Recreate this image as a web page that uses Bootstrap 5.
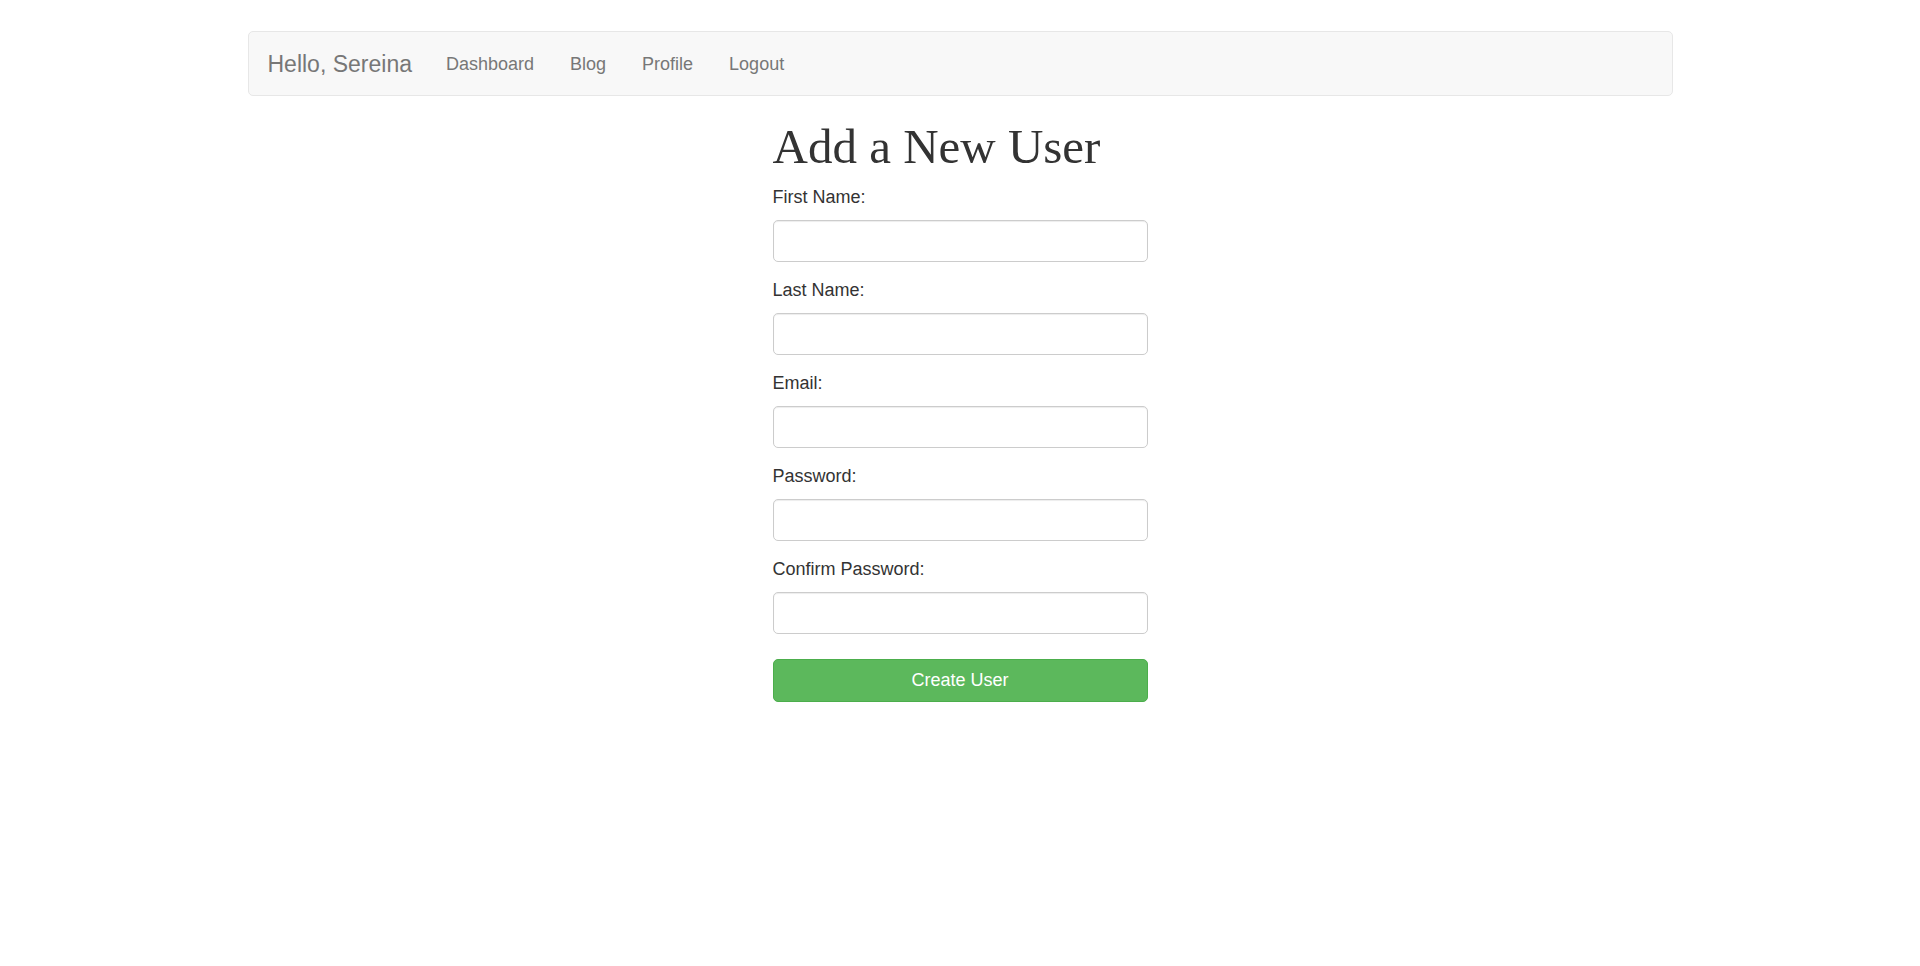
<!DOCTYPE html>
<html lang="en">
<head>
<meta charset="utf-8">
<meta name="viewport" content="width=device-width, initial-scale=1">
<title>Add a New User</title>
<link href="https://cdn.jsdelivr.net/npm/bootstrap@5.3.0/dist/css/bootstrap.min.css" rel="stylesheet">
<style>
  body { font-family: "Liberation Sans", Arial, sans-serif; font-size: 18px; line-height: 25px; color: #333; }
  .page-wrap { max-width: 1465px; padding: 31px 20px; }
  .site-nav { background: #f8f8f8; border: 1px solid #e7e7e7; border-radius: 5px; padding: 0 19px; margin-bottom: 24px; }
  .site-nav .navbar-brand { font-size: 23px; line-height: 25px; padding: 20px 0 18px; margin-right: 16px; color: #777; }
  .site-nav .navbar-nav .nav-link { padding: 20px 18px 18px; line-height: 25px; color: #777; }
  .user-form { max-width: 375px; }
  .form-title { font-family: "Liberation Serif", serif; font-size: 49px; line-height: 53px; margin-bottom: 12px; white-space: nowrap; }
  .user-form .form-label { margin-bottom: 10px; }
  .user-form .form-control { height: 42px; border-color: #ccc; border-radius: 5px; box-shadow: inset 0 1px 1px rgba(0,0,0,.075); }
  .field-gap { margin-bottom: 16px; }
  .btn-create { --bs-btn-color: #fff; --bs-btn-bg: #5cb85c; --bs-btn-border-color: #4cae4c; --bs-btn-hover-color: #fff; --bs-btn-hover-bg: #449d44; --bs-btn-hover-border-color: #398439; font-size: 18px; line-height: 25px; padding: 8px 15px; border-radius: 5px; margin-top: 25px; }
</style>
</head>
<body>
<div class="container-fluid page-wrap">
  <nav class="navbar navbar-expand site-nav" aria-label="Main">
    <a class="navbar-brand" href="#">Hello, Sereina</a>
    <ul class="navbar-nav">
      <li class="nav-item"><a class="nav-link" href="#">Dashboard</a></li>
      <li class="nav-item"><a class="nav-link" href="#">Blog</a></li>
      <li class="nav-item"><a class="nav-link" href="#">Profile</a></li>
      <li class="nav-item"><a class="nav-link" href="#">Logout</a></li>
    </ul>
  </nav>
  <main class="user-form mx-auto">
    <h1 class="form-title fw-normal">Add a New User</h1>
    <form>
      <div class="field-gap">
        <label class="form-label d-block" for="first">First Name:</label>
        <input class="form-control" type="text" id="first">
      </div>
      <div class="field-gap">
        <label class="form-label d-block" for="last">Last Name:</label>
        <input class="form-control" type="text" id="last">
      </div>
      <div class="field-gap">
        <label class="form-label d-block" for="email">Email:</label>
        <input class="form-control" type="email" id="email">
      </div>
      <div class="field-gap">
        <label class="form-label d-block" for="password">Password:</label>
        <input class="form-control" type="password" id="password">
      </div>
      <div>
        <label class="form-label d-block" for="confirm">Confirm Password:</label>
        <input class="form-control" type="password" id="confirm">
      </div>
      <button class="btn btn-create w-100" type="submit">Create User</button>
    </form>
  </main>
</div>
<script src="https://cdn.jsdelivr.net/npm/bootstrap@5.3.0/dist/js/bootstrap.bundle.min.js"></script>
</body>
</html>
